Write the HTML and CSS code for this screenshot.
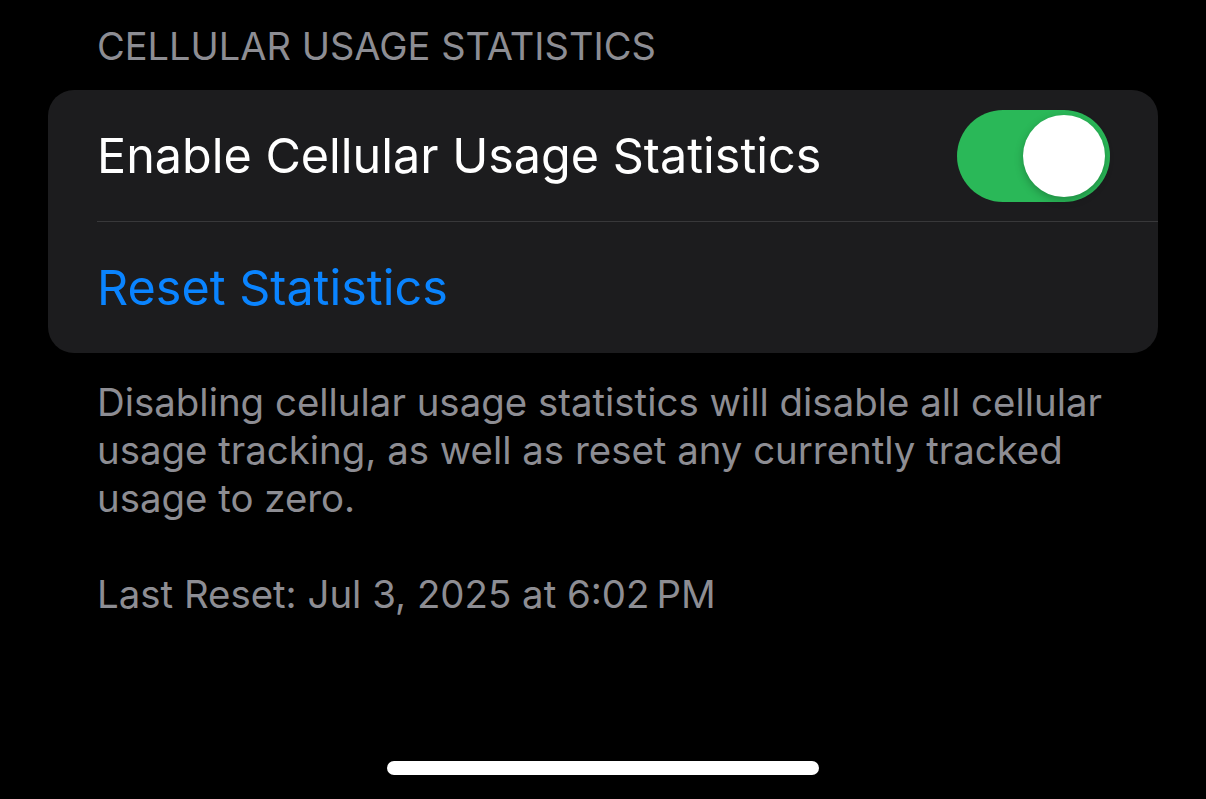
FILE: index.html
```html
<!DOCTYPE html>
<html lang="en">

<head>
    <meta charset="UTF-8">
    <meta name="viewport" content="width=device-width, initial-scale=1.0">
    <title>Cellular Usage Statistics</title>
    <link rel="stylesheet" href="styles.css">
</head>

<body>
    <div class="screen">
        <div class="section-header">CELLULAR USAGE STATISTICS</div>
        <div class="group">
            <div class="row">
                <span class="row-title">Enable Cellular Usage Statistics</span>
                <label class="switch">
                    <input type="checkbox" checked>
                    <span class="knob"></span>
                </label>
            </div>
            <div class="row">
                <span class="row-title link">Reset Statistics</span>
            </div>
        </div>
        <p class="footer">Disabling cellular usage statistics will disable all cellular usage tracking, as well as reset any currently tracked usage to zero.</p>
        <p class="footer last-reset">Last Reset: Jul 3, 2025 at 6:02&#8239;PM</p>
        <div class="home-indicator"></div>
    </div>
</body>

</html>
```

FILE: styles.css
```css
* {
    box-sizing: border-box;
}
body {
    margin: 0;
    background-color: #000;
    font-family: Inter, "Noto Sans", sans-serif;
    color: #fff;
}
.screen {
    height: 799px;
    display: flex;
    flex-direction: column;
    padding: 0 48px;
}
.section-header {
    padding: 24px 0 0 49px;
    font-size: 38px;
    line-height: 44px;
    color: #8d8d93;
    margin-bottom: 22px;
}
.group {
    background-color: #1c1c1e;
    border-radius: 26px;
    overflow: hidden;
}
.row {
    height: 131px;
    display: flex;
    align-items: center;
    justify-content: space-between;
    margin-left: 49px;
    padding-right: 48px;
}
.row + .row {
    border-top: 1px solid #38383a;
    height: 132px;
}
.row-title {
    font-size: 48.5px;
}
.row-title.link {
    color: #0a84ff;
}
.switch {
    position: relative;
    width: 153px;
    height: 92px;
}
.switch input {
    display: none;
}
.switch .knob {
    position: absolute;
    inset: 0;
    background-color: #2ab858;
    border-radius: 46px;
}
.switch .knob::after {
    content: "";
    position: absolute;
    top: 5px;
    right: 5px;
    width: 82px;
    height: 82px;
    border-radius: 50%;
    background-color: #fff;
    box-shadow: 0 3px 8px rgba(0, 0, 0, 0.25);
}
.footer {
    margin: 0;
    padding: 0 0 0 49px;
    font-size: 38.4px;
    line-height: 48px;
    color: #8d8d93;
}
.footer:first-of-type {
    margin-top: 25px;
}
.last-reset {
    margin-top: 48px;
}
.home-indicator {
    margin: auto auto 24px;
    width: 432px;
    height: 14px;
    border-radius: 7px;
    background-color: #fff;
}
```
